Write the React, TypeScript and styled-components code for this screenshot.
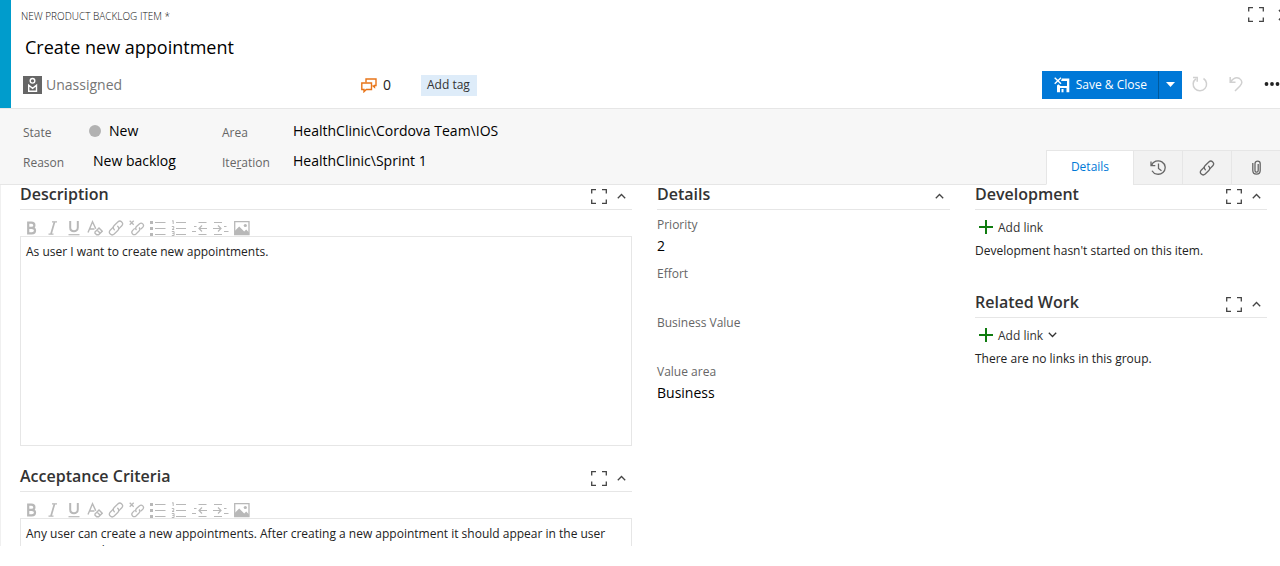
import React from "react";
import styled, { createGlobalStyle, css } from "styled-components";

const GlobalStyle = createGlobalStyle`
  *, *::before, *::after { box-sizing: border-box; }
  body {
    margin: 0;
    background: #fff;
    color: #222;
    font: 12px/18px "Open Sans", "Noto Sans", sans-serif;
  }
  button, input, textarea { font: inherit; color: inherit; }
  button { padding: 0; border: 0; background: none; cursor: pointer; }
  h2 { margin: 0; }
  svg { display: block; flex: none; }
`;

const Page = styled.main`
  display: flex;
  flex-direction: column;
  height: 100vh;
  padding-bottom: 20px;
  overflow: hidden;
`;

const Header = styled.header`
  flex: none;
  padding: 0 0 9px 10px;
  border-left: 11px solid #009ccc;
  overflow: hidden;
`;

const TopRow = styled.div`
  display: flex;
  align-items: center;
  justify-content: space-between;
  height: 31px;
`;

const ItemType = styled.span`
  font-size: 10px;
  font-weight: 300;
  color: #111;
`;

const WindowButtons = styled.div`
  display: flex;
  gap: 14px;
  margin-right: -10px;
  padding-bottom: 2px;
  color: #444;
`;

const TitleInput = styled.input`
  display: block;
  width: 60%;
  height: 31px;
  padding: 0 4px;
  border: 0;
  outline: 0;
  background: transparent;
  font-size: 18px;
  color: #000;
`;

const MetaRow = styled.div`
  display: flex;
  align-items: center;
  height: 28px;
  margin-top: 9px;
  padding-left: 2px;
`;

const Assignee = styled.button`
  display: flex;
  align-items: center;
  gap: 4px;
  width: 338px;
  font-size: 14px;
  color: #767676;
`;

const Comments = styled.button`
  display: flex;
  align-items: center;
  gap: 6px;
  width: 60px;
  font-size: 14px;
`;

const TagButton = styled.button`
  height: 21px;
  padding: 0 7px 0 6px;
  background: #deecf9;
  color: #333;
`;

const Actions = styled.div`
  display: flex;
  align-items: center;
  margin: 0 -10px 0 auto;
`;

const SaveButton = styled.button`
  display: flex;
  align-items: center;
  gap: 6px;
  height: 28px;
  padding: 0 11px 0 12px;
  background: #0078d7;
  color: #fff;
`;

const SaveMenuButton = styled.button`
  display: grid;
  place-items: center;
  width: 24px;
  height: 28px;
  padding-bottom: 2px;
  border-left: 1px solid #005a9e;
  background: #0078d7;
  color: #fff;
`;

const IconAction = styled.button<{ $enabled?: boolean }>`
  display: grid;
  place-items: center;
  width: 36px;
  height: 28px;
  padding-bottom: 2px;
  color: ${(p) => (p.$enabled ? "#222" : "#d0d0d0")};
`;

const Summary = styled.section`
  display: flex;
  flex: none;
  align-items: flex-end;
  justify-content: space-between;
  border-top: 1px solid #e6e6e6;
  border-bottom: 1px solid #e6e6e6;
  background: #f7f7f7;
`;

const FieldLabel = styled.label`
  padding-top: 2px;
  color: #666;
`;

const Fields = styled.div`
  display: grid;
  flex: 1;
  grid-template-columns: 66px 133px 71px 1fr;
  grid-auto-rows: 30px;
  align-items: center;
  padding: 7px 0 8px 23px;

  ${FieldLabel} {
    padding-top: 4px;
  }
`;

const FieldValue = styled.div<{ $indent?: boolean }>`
  display: flex;
  align-items: center;
  gap: 8px;
  padding-left: ${(p) => (p.$indent ? 4 : 0)}px;
`;

const StateDot = styled.span`
  flex: none;
  width: 12px;
  height: 12px;
  border-radius: 50%;
  background: #b2b2b2;
`;

const ValueInput = styled.input`
  width: 100%;
  min-width: 0;
  height: 22px;
  padding: 0 0 1px;
  border: 0;
  outline: 0;
  background: transparent;
  font-size: 14px;
  color: #000;
`;

const Tabs = styled.nav`
  display: flex;
  height: 35px;
  margin-bottom: -1px;
`;

const Tab = styled.button<{ $active?: boolean }>`
  display: grid;
  place-items: center;
  width: 49px;
  border: solid #e6e6e6;
  border-width: 1px 0 1px 1px;
  background: #f2f2f2;
  color: #666;
  ${(p) =>
    p.$active &&
    css`
      width: 87px;
      padding-bottom: 2px;
      border-bottom-color: #fff;
      background: #fff;
      color: #0078d7;
    `}
`;

const Body = styled.div`
  display: grid;
  flex: 1;
  grid-template-columns: minmax(0, 612fr) minmax(0, 293fr) minmax(0, 292fr);
  gap: 25px;
  min-height: 0;
  padding: 0 13px 0 19px;
  border-left: 1px solid #f0f0f0;
  overflow: hidden;
`;

const Column = styled.div<{ $gap: number }>`
  display: flex;
  flex-direction: column;
  gap: ${(p) => p.$gap}px;
`;

const GroupHeader = styled.div`
  display: flex;
  justify-content: space-between;
  height: 25px;
  padding-right: 6px;
  border-bottom: 1px solid #e6e6e6;
`;

const GroupTitle = styled.h2`
  font-size: 16px;
  font-weight: 600;
  line-height: 18px;
  color: #333;
`;

const GroupButtons = styled.div`
  display: flex;
  align-items: center;
  gap: 10px;
  height: 22px;
  color: #444;
`;

const Toolbar = styled.div`
  display: flex;
  margin: 10px 0 0 1px;
`;

const ToolButton = styled.button`
  display: grid;
  place-items: center;
  width: 21px;
  height: 16px;
  color: #b8b8b8;
`;

const Editor = styled.textarea`
  display: block;
  width: 100%;
  height: 210px;
  padding: 6px 5px;
  border: 1px solid #e6e6e6;
  outline: 0;
  resize: none;
  line-height: 17px;
`;

const DetailList = styled.div`
  display: grid;
  gap: 5px;
  padding-top: 3px;
`;

const Detail = styled.div`
  display: grid;
  grid-auto-rows: 22px;
  align-items: center;
`;

const AddLink = styled.button`
  display: flex;
  align-items: center;
  gap: 5px;
  height: 24px;
  margin: 5px 0 0 4px;
  color: #333;
`;

const AddLinkText = styled.span`
  padding-top: 1px;
`;

const Note = styled.p`
  margin: 0;
  line-height: 24px;
`;

const ExpandIcon = () => (
  <svg width="16" height="15" viewBox="0 0 16 15" fill="none" stroke="currentColor" strokeWidth="1.300">
    <path d="M.7 4.500V.7H5M11 .7h4.300v3.800M15.300 10.500v3.800H11M5 14.300H.7v-3.800" />
  </svg>
);

const ChevronIcon = ({ down }: { down?: boolean }) => (
  <svg width="9" height="6" viewBox="0 0 9 6" fill="none" stroke="currentColor" strokeWidth="1.300">
    <path d={down ? "M.8 .8l3.700 3.700L8.200 .8" : "M.8 5.200l3.700-3.700 3.700 3.700"} />
  </svg>
);

const CloseIcon = () => (
  <svg width="12" height="16" viewBox="0 0 12 16" stroke="currentColor" strokeWidth="1.600">
    <path d="M1 3l10 10M11 3L1 13" />
  </svg>
);

const PersonIcon = () => (
  <svg width="19" height="18" viewBox="0 0 19 18" fill="none" stroke="#fff" strokeWidth="1.400">
    <path d="M0 0h19v18H0z" fill="#666" stroke="none" />
    <circle cx="9.500" cy="4.800" r="2.300" />
    <path d="M5.700 9.200v6.100h7.800V9.200L9.600 12.300z" />
  </svg>
);

const CommentsIcon = () => (
  <svg width="16" height="15" viewBox="0 0 16 15" fill="none" stroke="#e8751a" strokeWidth="1.400">
    <path d="M5 4.500V1h10v6.500h-1.500V9.300L11.500 7.500" />
    <path d="M.8 5h9.700v6.500H5.300L3 13.700v-2.200H.8z" />
  </svg>
);

const SaveCloseIcon = () => (
  <svg width="16" height="16" viewBox="0 0 16 16" fill="none">
    <path
      d="M8 1.500h7.300V15.300H12.500V11H6v4.300H3V8.500L4.300 7.300 6.500 9H13V4H7z"
      fill="#fff"
    />
    <path d="M8.500 12v3.300" stroke="#fff" strokeWidth="2" />
    <path d="M.7 .7l6.300 6M7 .7L.7 6.700" stroke="#fff" strokeWidth="1.400" />
  </svg>
);

const CaretIcon = () => (
  <svg width="9" height="5" viewBox="0 0 9 5" fill="currentColor">
    <path d="M0 0h9L4.500 5z" />
  </svg>
);

const RefreshIcon = () => (
  <svg width="16" height="16" viewBox="0 0 16 16" fill="none" stroke="currentColor" strokeWidth="1.500">
    <path d="M3.800 2.800A6.700 6.700 0 1 0 11.500 2.500M1 1.500h4.200v4.200" />
  </svg>
);

const UndoIcon = () => (
  <svg width="14" height="16" viewBox="0 0 14 16" fill="none" stroke="currentColor" strokeWidth="1.500">
    <path d="M1.200 1v5.200h5.300M1.500 6C4 2.500 7.500 1 10.500 2.500 13.500 4.500 13.500 7.500 11 10L6 15" />
  </svg>
);

const MoreIcon = () => (
  <svg width="16" height="4" viewBox="0 0 16 4" fill="currentColor">
    <circle cx="2.500" cy="2" r="1.900" />
    <circle cx="8" cy="2" r="1.900" />
    <circle cx="13.500" cy="2" r="1.900" />
  </svg>
);

const HistoryIcon = () => (
  <svg width="17" height="16" viewBox="0 0 17 16" fill="none" stroke="currentColor" strokeWidth="1.300">
    <path d="M1 1.500v4.200h4.300M1.500 5.500A7 6.700 0 1 1 2 10.700M8.500 3.500v5l3 2.300" />
  </svg>
);

const LinkIcon = () => (
  <svg width="16" height="16" viewBox="0 0 16 16" fill="none" stroke="currentColor" strokeWidth="1.300" strokeLinecap="round">
    <path d="M6.300 9.700C4.800 8.200 5 6.700 6.200 5.500L9.800 2C12.500-.5 16.200 3 13.800 5.800L11 8.600" />
    <path d="M9.700 6.300C11.200 7.800 11 9.300 9.800 10.500L6.200 14C3.500 16.500-.2 13 2.200 10.200L5 7.400" />
  </svg>
);

const ClipIcon = () => (
  <svg width="9" height="15" viewBox="0 0 9 15" fill="none" stroke="currentColor" strokeWidth="1.300">
    <path d="M6.200 4v6.500c0 2.200-3.200 2.200-3.200 0V3.500C3 .2 8.200 .2 8.200 3.500v7c0 4.700-7.400 4.700-7.400 0V3" />
  </svg>
);

const PlusIcon = () => (
  <svg width="14" height="14" viewBox="0 0 14 14" fill="#107c10">
    <path d="M6 0h2v6h6v2H8v6H6V8H0V6h6z" />
  </svg>
);

const toolSvg = { width: 16, height: 16, viewBox: "0 0 16 16", fill: "none", stroke: "currentColor" };

const tools: { name: string; icon: React.ReactNode }[] = [
  {
    name: "Bold",
    icon: (
      <svg {...toolSvg} strokeWidth="2.200">
        <path d="M4.200 2.600v10.800h3.600c4.300 0 4.300-5.600 0-5.600H4.200h3.200c4 0 4-5.200 0-5.200z" />
      </svg>
    ),
  },
  {
    name: "Italic",
    icon: (
      <svg {...toolSvg} strokeWidth="1.200">
        <path d="M7 1.800h5M3.500 14.200h5" />
        <path d="M9.500 2L6 14" strokeWidth="1.700" />
      </svg>
    ),
  },
  {
    name: "Underline",
    icon: (
      <svg {...toolSvg} strokeWidth="2">
        <path d="M4.200 1v6.500c0 5 7.600 5 7.600 0V1" />
        <path d="M2.500 14.700h11" strokeWidth="1.200" />
      </svg>
    ),
  },
  {
    name: "Clear formatting",
    icon: (
      <svg {...toolSvg} strokeWidth="1.400">
        <path d="M1 12.500L5.500 1.800l3.300 7M2.700 9h4.800" />
        <path d="M8 12l4-4 3.200 3.200-3.600 3.600H9.700L8 13.200zM10 10l3.200 3.200" />
      </svg>
    ),
  },
  { name: "Insert link", icon: <LinkIcon /> },
  {
    name: "Remove link",
    icon: (
      <svg {...toolSvg} strokeWidth="1.300">
        <path d="M.7 .7l4 4M4.700 .7l-4 4" />
        <path d="M7.500 10C6.200 8.800 6.500 7.500 7.500 6.500L10.300 3.900C12.800 1.800 15.800 4.800 13.800 7.200L11.500 9.400" />
        <path d="M10 7.500c1.300 1.300 1 2.500 0 3.500l-3 2.900C4.500 16 1.500 13 3.500 10.600L5.700 8.400" />
      </svg>
    ),
  },
  {
    name: "Bulleted list",
    icon: (
      <svg {...toolSvg} strokeWidth="1.200">
        <path d="M5 2.500H15.500M5 8.500H15.500M5 14.500H15.500" />
        <path d="M0 2.500h3M0 8.500h3M0 14.500h3" strokeWidth="3" />
      </svg>
    ),
  },
  {
    name: "Numbered list",
    icon: (
      <svg {...toolSvg} strokeWidth="1">
        <path d="M5 2.500H15M5 8.500H15M5 14.500H15" strokeWidth="1.200" />
        <path d="M1 1.200l1.200-.7V4M.8 6.500h2v1.700L1 9.500h2.200M.8 11.500h2.300v4H.8M1.300 13.400h1.700" />
      </svg>
    ),
  },
  {
    name: "Decrease indent",
    icon: (
      <svg {...toolSvg} strokeWidth="1.200">
        <path d="M6.500 2.500h8M6.500 14.500h8M0 11.500h4M2 6.500h2.500M7 8.500h8M10 5.500l-3 3 3 3" />
      </svg>
    ),
  },
  {
    name: "Increase indent",
    icon: (
      <svg {...toolSvg} strokeWidth="1.200">
        <path d="M1 2.500h8M1 14.500h8M11 11.500h4.500M11 6.500h2.500M0 8.500h8M5 5.500l3 3-3 3" />
      </svg>
    ),
  },
  {
    name: "Insert image",
    icon: (
      <svg {...toolSvg}>
        <path d="M.7 1.700h14.300v13H.7z" strokeWidth="1.300" />
        <path d="M.7 11l4.500-4.500 5 5 2-2L15 12.500v2.200H.7z" fill="currentColor" stroke="none" />
        <circle cx="11.300" cy="5.500" r="1.600" fill="currentColor" stroke="none" />
      </svg>
    ),
  },
];

function Group({
  title,
  expandable = true,
  children,
}: {
  title: string;
  expandable?: boolean;
  children: React.ReactNode;
}) {
  return (
    <section>
      <GroupHeader>
        <GroupTitle>{title}</GroupTitle>
        <GroupButtons>
          {expandable && (
            <button aria-label={`Maximize ${title}`}>
              <ExpandIcon />
            </button>
          )}
          <button aria-label={`Collapse ${title}`}>
            <ChevronIcon />
          </button>
        </GroupButtons>
      </GroupHeader>
      {children}
    </section>
  );
}

function RichText({ title, text }: { title: string; text: string }) {
  return (
    <Group title={title}>
      <Toolbar role="toolbar" aria-label={`${title} formatting`}>
        {tools.map((tool) => (
          <ToolButton key={tool.name} aria-label={tool.name}>
            {tool.icon}
          </ToolButton>
        ))}
      </Toolbar>
      <Editor aria-label={title} defaultValue={text} spellCheck={false} />
    </Group>
  );
}

const details = [
  { id: "priority", label: "Priority", value: "2" },
  { id: "effort", label: "Effort", value: "" },
  { id: "business-value", label: "Business Value", value: "" },
  { id: "value-area", label: "Value area", value: "Business" },
];

export default function App() {
  return (
    <>
      <GlobalStyle />
      <Page>
        <Header>
          <TopRow>
            <ItemType>NEW PRODUCT BACKLOG ITEM *</ItemType>
            <WindowButtons>
              <button aria-label="Full screen">
                <ExpandIcon />
              </button>
              <button aria-label="Close">
                <CloseIcon />
              </button>
            </WindowButtons>
          </TopRow>
          <TitleInput aria-label="Title" defaultValue="Create new appointment" />
          <MetaRow>
            <Assignee>
              <PersonIcon />
              Unassigned
            </Assignee>
            <Comments aria-label="0 comments">
              <CommentsIcon />0
            </Comments>
            <TagButton>Add tag</TagButton>
            <Actions>
              <SaveButton>
                <SaveCloseIcon />
                Save &amp; Close
              </SaveButton>
              <SaveMenuButton aria-label="More save options">
                <CaretIcon />
              </SaveMenuButton>
              <IconAction aria-label="Refresh">
                <RefreshIcon />
              </IconAction>
              <IconAction aria-label="Undo">
                <UndoIcon />
              </IconAction>
              <IconAction $enabled aria-label="More actions">
                <MoreIcon />
              </IconAction>
            </Actions>
          </MetaRow>
        </Header>

        <Summary>
          <Fields>
            <FieldLabel htmlFor="state">State</FieldLabel>
            <FieldValue>
              <StateDot />
              <ValueInput id="state" defaultValue="New" />
            </FieldValue>
            <FieldLabel htmlFor="area">Area</FieldLabel>
            <ValueInput id="area" defaultValue="HealthClinic\Cordova Team\IOS" />
            <FieldLabel htmlFor="reason">Reason</FieldLabel>
            <FieldValue $indent>
              <ValueInput id="reason" defaultValue="New backlog" />
            </FieldValue>
            <FieldLabel htmlFor="iteration">
              Ite<u>r</u>ation
            </FieldLabel>
            <ValueInput id="iteration" defaultValue="HealthClinic\Sprint 1" />
          </Fields>
          <Tabs aria-label="Work item pages">
            <Tab $active>Details</Tab>
            <Tab aria-label="History">
              <HistoryIcon />
            </Tab>
            <Tab aria-label="Links">
              <LinkIcon />
            </Tab>
            <Tab aria-label="Attachments">
              <ClipIcon />
            </Tab>
          </Tabs>
        </Summary>

        <Body>
          <Column $gap={21}>
            <RichText title="Description" text="As user I want to create new appointments." />
            <RichText
              title="Acceptance Criteria"
              text="Any user can create a new appointments. After creating a new appointment it should appear in the user appointment list."
            />
          </Column>
          <Column $gap={0}>
            <Group title="Details" expandable={false}>
              <DetailList>
                {details.map((field) => (
                  <Detail key={field.id}>
                    <FieldLabel htmlFor={field.id}>{field.label}</FieldLabel>
                    <ValueInput id={field.id} defaultValue={field.value} />
                  </Detail>
                ))}
              </DetailList>
            </Group>
          </Column>
          <Column $gap={30}>
            <Group title="Development">
              <AddLink>
                <PlusIcon />
                <AddLinkText>Add link</AddLinkText>
              </AddLink>
              <Note>Development hasn't started on this item.</Note>
            </Group>
            <Group title="Related Work">
              <AddLink>
                <PlusIcon />
                <AddLinkText>Add link</AddLinkText>
                <ChevronIcon down />
              </AddLink>
              <Note>There are no links in this group.</Note>
            </Group>
          </Column>
        </Body>
      </Page>
    </>
  );
}
